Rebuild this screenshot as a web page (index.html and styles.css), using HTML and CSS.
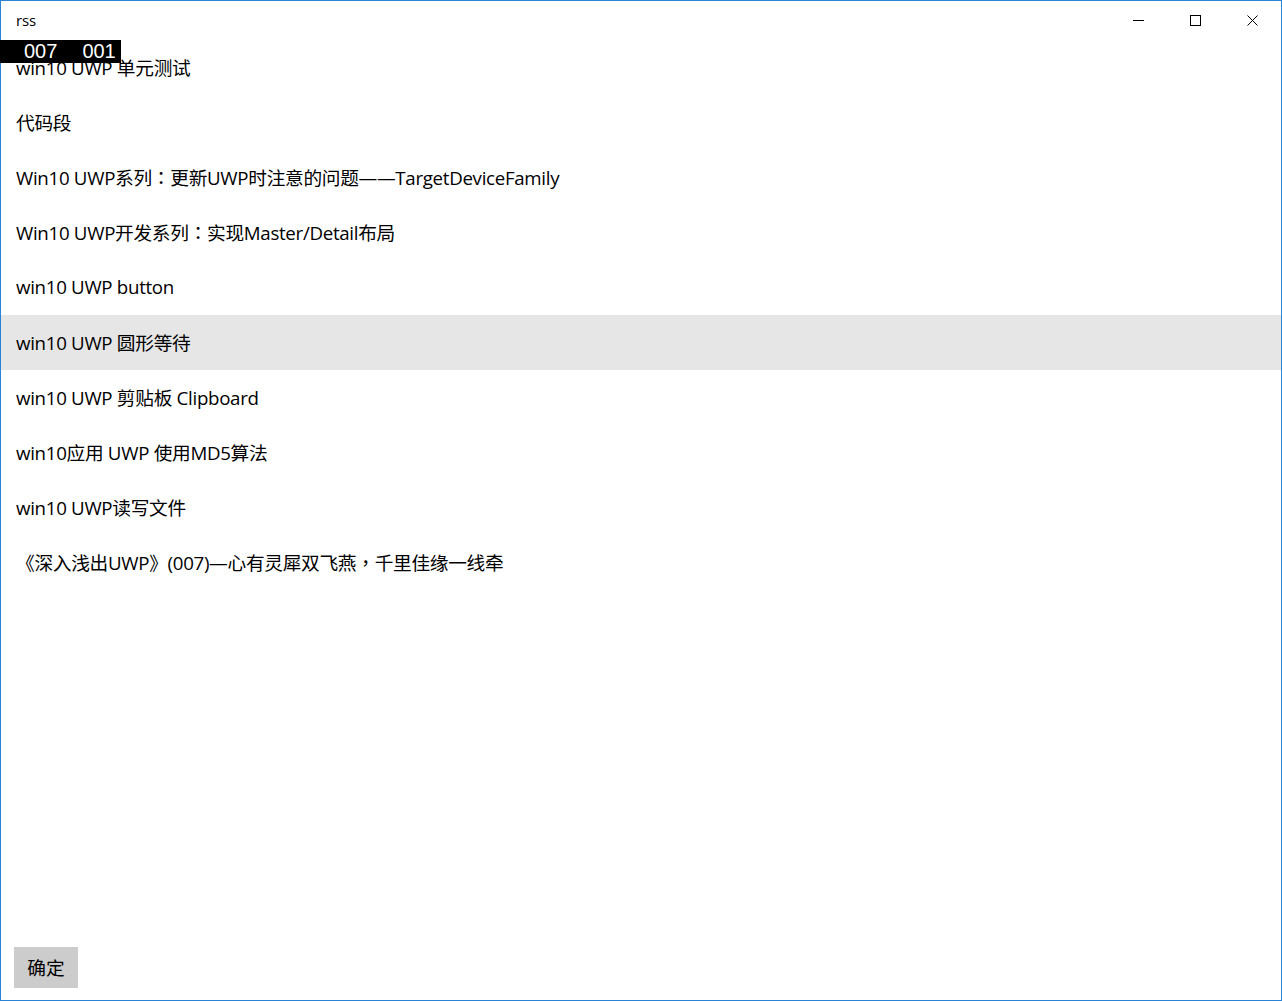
FILE: index.html
```html
<!DOCTYPE html>
<html lang="zh-CN">
<head>
<meta charset="utf-8">
<title>rss</title>
<link rel="stylesheet" href="styles.css">
</head>
<body>
<div class="window">
  <header class="titlebar">
    <span class="title">rss</span>
    <div class="caption">
      <div class="cap-btn">
        <svg width="11" height="11" viewBox="0 0 11 11"><path d="M0 5.5H11" stroke="#000" stroke-width="1"/></svg>
      </div>
      <div class="cap-btn">
        <svg width="11" height="11" viewBox="0 0 11 11"><rect x="0.5" y="0.5" width="10" height="10" fill="none" stroke="#000" stroke-width="1"/></svg>
      </div>
      <div class="cap-btn">
        <svg width="11" height="11" viewBox="0 0 11 11"><path d="M0.5 0.5L10.5 10.5M10.5 0.5L0.5 10.5" stroke="#000" stroke-width="1"/></svg>
      </div>
    </div>
  </header>
  <main class="content">
    <ul class="list">
      <li class="item">win10 UWP 单元测试</li>
      <li class="item">代码段</li>
      <li class="item">Win10 UWP系列<span class="punct">：</span>更新UWP时注意的问题——TargetDeviceFamily</li>
      <li class="item">Win10 UWP开发系列<span class="punct">：</span>实现Master/Detail布局</li>
      <li class="item">win10 UWP button</li>
      <li class="item selected">win10 UWP 圆形等待</li>
      <li class="item">win10 UWP 剪贴板 Clipboard</li>
      <li class="item">win10应用 UWP 使用MD5算法</li>
      <li class="item">win10 UWP读写文件</li>
      <li class="item">《深入浅出UWP》(007)—心有灵犀双飞燕<span class="punct">，</span>千里佳缘一线牵</li>
    </ul>
    <div class="footer">
      <button class="ok">确定</button>
    </div>
    <div class="fps"><span>007</span><span>001</span></div>
  </main>
</div>
</body>
</html>
```
FILE: styles.css
```css
html, body {
  margin: 0;
  padding: 0;
  background: #fff;
}
body {
  font-family: "Open Sans", "Noto Sans CJK SC", sans-serif;
  color: #000;
}
.window {
  box-sizing: border-box;
  width: 1282px;
  height: 1001px;
  border: 1px solid #2b83d6;
  display: flex;
  flex-direction: column;
  background: #fff;
}
.titlebar {
  height: 39px;
  display: flex;
  align-items: center;
  justify-content: space-between;
  flex: none;
}
.title {
  font-size: 15px;
  padding-left: 15px;
  margin-top: -1px;
  letter-spacing: -0.2px;
}
.caption {
  display: flex;
  align-self: flex-start;
  height: 39px;
}
.cap-btn {
  width: 57px;
  height: 39px;
  display: flex;
  align-items: center;
  justify-content: center;
}
.cap-btn svg {
  display: block;
}
.content {
  position: relative;
  flex: 1;
  display: flex;
  flex-direction: column;
  justify-content: space-between;
}
.list {
  list-style: none;
  margin: 0;
  padding: 0;
}
.item {
  height: 55px;
  display: flex;
  align-items: center;
  padding-left: 15px;
  padding-bottom: 2px;
  box-sizing: border-box;
  font-size: 18.7px;
  letter-spacing: -0.3px;
  color: #000;
  white-space: nowrap;
}
.punct {
  font-family: "Noto Sans CJK TC", sans-serif;
}
.item.selected {
  background: #e6e6e6;
}
.footer {
  padding: 0 0 12px 13px;
}
.ok {
  display: block;
  width: 64px;
  height: 41px;
  border: none;
  background: #cccccc;
  font-family: "Open Sans", "Noto Sans CJK SC", sans-serif;
  font-size: 18.7px;
  color: #000;
  padding: 0 0 3px 0;
}
.fps {
  position: absolute;
  left: -1px;
  top: 0;
  width: 121px;
  height: 23px;
  background: #000;
  color: #fff;
  font-family: "Liberation Sans", sans-serif;
  font-size: 20px;
  line-height: 23px;
  display: flex;
  align-items: center;
  gap: 25px;
  padding-left: 24px;
  box-sizing: border-box;
}
```
